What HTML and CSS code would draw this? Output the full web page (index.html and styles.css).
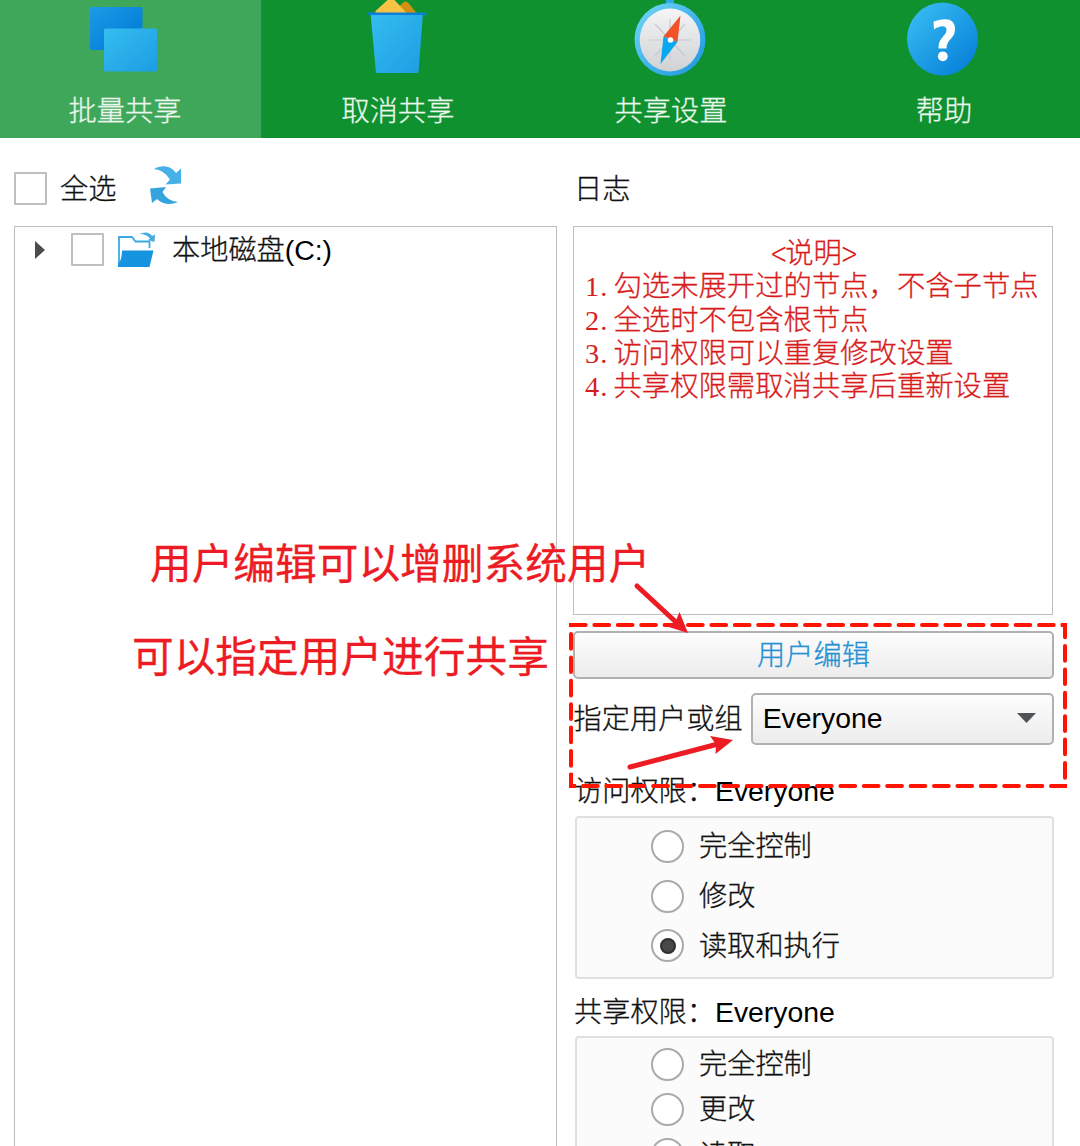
FILE: index.html
```html
<!DOCTYPE html>
<html lang="zh-CN">
<head>
<meta charset="utf-8">
<title>批量共享</title>
<link rel="stylesheet" href="styles.css">
</head>
<body>
<div class="app">
  <nav class="toolbar">
    <div class="tab active">
      <svg class="tab-icon" width="80" height="80" viewBox="0 0 80 80">
        <defs>
          <linearGradient id="light" x1="0" y1="0" x2="1" y2="1"><stop offset="0" stop-color="#35bdf0"/><stop offset="1" stop-color="#1d9de3"/></linearGradient>
          <linearGradient id="dark" x1="0" y1="0" x2="1" y2="1"><stop offset="0" stop-color="#1c9be5"/><stop offset="0.7" stop-color="#0781da"/></linearGradient>
        </defs>
        <rect x="5" y="8" width="52.5" height="43" rx="1.5" fill="url(#dark)"/>
        <rect x="19" y="29.500" width="53" height="43" rx="1.5" fill="url(#light)"/>
      </svg>
      <span>批量共享</span>
    </div>
    <div class="tab">
      <svg class="tab-icon" width="80" height="80" viewBox="9.500 0 80 80">
        <path d="M44 14 L54 4 Q57 1 60 4 L68 14 Z" fill="#d1900f"/>
        <path d="M27 14 V12 L38 2 Q42 -2 46 1 L58 14 Z" fill="#f6c344"/>
        <path d="M22 14 H74.500 L70 73 Q69.900 74 68.500 74 H29 Q27.500 74 27.400 73 Z" fill="url(#light)"/>
        <rect x="18.500" y="13.500" width="59.500" height="2.500" rx="1" fill="#0c80d8"/>
      </svg>
      <span>取消共享</span>
    </div>
    <div class="tab">
      <svg class="tab-icon" width="80" height="80" viewBox="0 0 80 80">
        <defs>
          <linearGradient id="ring" x1="0" y1="0" x2="1" y2="1"><stop offset="0" stop-color="#78d9f8"/><stop offset="0.5" stop-color="#43b5ed"/><stop offset="1" stop-color="#1b95dd"/></linearGradient>
          <linearGradient id="dial" x1="0" y1="0" x2="0" y2="1"><stop offset="0" stop-color="#f5f5f6"/><stop offset="1" stop-color="#cfd1d4"/></linearGradient>
        </defs>
        <rect x="35" y="-2" width="8" height="8" fill="#2baae8"/>
        <ellipse cx="39" cy="40.500" rx="35.500" ry="36.500" fill="url(#ring)"/>
        <ellipse cx="39" cy="41" rx="30.300" ry="31.500" fill="url(#dial)"/>
        <path d="M18 41H60M39 20V61M24 25L54 57M54 25L24 57" stroke="#c8cbce" stroke-width="1.200"/>
        <path d="M49.500 16.500 L32.500 37.500 L46.500 43 Z" fill="#f25228"/>
        <path d="M29.500 65 L32.500 37.500 L46.500 43 Z" fill="#0aa7f0"/>
        <circle cx="39.500" cy="41" r="2.800" fill="#fff"/>
      </svg>
      <span>共享设置</span>
    </div>
    <div class="tab">
      <svg class="tab-icon" width="80" height="80" viewBox="0 0 80 80">
        <defs><linearGradient id="help" x1="0.100" y1="0.100" x2="0.850" y2="0.900"><stop offset="0" stop-color="#36bbf0"/><stop offset="1" stop-color="#0882da"/></linearGradient></defs>
        <ellipse cx="38.500" cy="40" rx="35.500" ry="36.500" fill="url(#help)"/>
        <path d="M29.500 22.500 Q51 15.500 51 30 C51 40 42.500 40 42.500 49.500 H34.500 C34 38.500 42.500 37 42.500 31 C42.500 25.500 35 27 30 30.500 Z" fill="#fff"/>
        <circle cx="38.800" cy="57.300" r="4.900" fill="#fff"/>
      </svg>
      <span>帮助</span>
    </div>
  </nav>
  <main class="content">
    <section class="left">
      <div class="head">
        <span class="check"></span>
        <span class="all">全选</span>
        <svg class="refresh" width="34" height="40" viewBox="0 0 34 40">
          <path d="M4 4 C11 0 20 0 26 8 L31 3.500 V18.500 L15.500 19.500 L20 14.500 Q14 5 4 4Z" fill="#45b1e8"/>
          <path d="M0 23.500 L16 22 L12.500 27 Q17 36 28 37 C21 40 13 40 7 34 L2 38 Z" fill="#35a4dc"/>
        </svg>
      </div>
      <div class="tree">
        <div class="node">
          <svg class="caret" width="10" height="18" viewBox="0 0 10 18"><path d="M0 0L10 9L0 18Z" fill="#4b4b4b"/></svg>
          <span class="check"></span>
          <svg class="folder" width="40" height="40" viewBox="0 0 40 40">
            <path d="M2 35 V7 H15 L18.500 11.500 H32.500 V18" fill="#fff" stroke="#3aaae5" stroke-width="1.800"/>
            <path d="M5 20.500 H36.500 L32.500 37 H1 V34 Q5 30 5 20.500 Z" fill="#1694df"/>
            <path d="M22 4 Q31 0 35 6 L38 4.500 L37.500 12 L31 10 L33 8.500 Q29 3.500 22 4Z" fill="#43ace2"/>
          </svg>
          <span>本地磁盘<span class="latin">(C:)</span></span>
        </div>
      </div>
    </section>
    <section class="right">
      <div class="head">日志</div>
      <div class="log">
        <div class="log-title"><span class="angle">&lt;</span>说明<span class="angle">&gt;</span></div>
        <div><span class="num">1.</span>勾选未展开过的节点，不含子节点</div>
        <div><span class="num">2.</span>全选时不包含根节点</div>
        <div><span class="num">3.</span>访问权限可以重复修改设置</div>
        <div><span class="num">4.</span>共享权限需取消共享后重新设置</div>
      </div>
      <div class="button">用户编辑</div>
      <div class="field">
        <span>指定用户或组</span>
        <div class="combo"><span class="latin">Everyone</span><svg width="19" height="10" viewBox="0 0 19 10"><path d="M0 0H19L9.500 10Z" fill="#505355"/></svg></div>
      </div>
      <div class="caption access">访问权限：<span class="latin">Everyone</span></div>
      <div class="group">
        <div class="option"><i></i>完全控制</div>
        <div class="option"><i></i>修改</div>
        <div class="option"><i class="on"></i>读取和执行</div>
      </div>
      <div class="caption share">共享权限：<span class="latin">Everyone</span></div>
      <div class="group compact">
        <div class="option"><i></i>完全控制</div>
        <div class="option"><i></i>更改</div>
        <div class="option"><i class="on"></i>读取</div>
      </div>
    </section>
  </main>
  <div class="note note-edit">用户编辑可以增删系统用户</div>
  <div class="note note-share">可以指定用户进行共享</div>
  <svg class="marks" width="1080" height="1146" viewBox="0 0 1080 1146">
    <g fill="none" stroke="#fe1400" stroke-width="4" stroke-linecap="round" stroke-dasharray="14.700 8.700">
      <path d="M571 625H1065"/>
      <path d="M571 786H1065" stroke-dashoffset="11.400"/>
      <path d="M571 625V786" stroke-dashoffset="14.400"/>
      <path d="M1065 625V786" stroke-dashoffset="2.400"/>
      <path stroke-linecap="square" d="M571 625h1M571 786v-11M571 786h3M1064 786h1M1063 625h2v5" stroke-dasharray="none"/>
    </g>
    <g stroke="#ed1c24" stroke-width="5" stroke-linecap="round" fill="#ed1c24">
      <path d="M637 586L678 624"/><path d="M630 767L718 744"/>
      <path stroke="none" d="M688 633L667 626.500L675.500 621.500L679.500 612Z"/>
      <path stroke="none" d="M733 740L710 736L716 744.500L715.500 754Z"/>
    </g>
  </svg>
</div>
</body>
</html>
```
FILE: styles.css
```css
* { box-sizing: border-box; }
body {
  margin: 0;
  background: #fff;
  color: #111;
  font: 300 28.2px/34px "Liberation Sans", "Noto Sans CJK SC", sans-serif;
  -webkit-text-stroke: 0.3px currentColor;
}
.app { position: relative; height: 1146px; overflow: hidden; display: flex; flex-direction: column; }
.latin { color: #000; font-size: 28.4px; -webkit-text-stroke: 0; }

.toolbar { display: flex; height: 138px; flex: none; background: #0e912e; margin-left: -12px; }
.tab { width: 273px; flex: none; display: flex; flex-direction: column; align-items: center; color: #eaf6ec; }
.tab.active { background: #3fa75a; }
.tab-icon { display: block; margin: -1px 0 15px; flex: none; overflow: visible; }
.tab > span { padding-left: 1px; }

.content { flex: 1; min-height: 0; display: flex; gap: 16px; padding: 0 27px 0 14px; }
.left { width: 543px; flex: none; display: flex; flex-direction: column; white-space: nowrap; }
.right { flex: 1; min-width: 0; white-space: nowrap; }
.head { height: 88px; padding: 34px 1px 0; display: flex; align-items: flex-start; flex: none; }
.left .head { padding: 34px 0 0; }
.check { width: 33px; height: 33px; border: 2px solid #bfbfbf; border-radius: 1px; background: #fff; flex: none; }
.all { margin-left: 13px; width: 56px; }
.refresh { margin: -7px 0 0 34px; }

.tree { flex: 1; border: solid #bebebe; border-width: 1px 1px 0; padding: 6px 0 0 20px; }
.node { display: flex; align-items: center; height: 34px; }
.caret { margin-right: 26px; }
.folder { margin: 0 15px 0 13px; }
.node > .check { margin-top: -1px; }

.log { height: 389px; border: 1px solid #bebebe; padding: 10px 10px 0 11px; color: #d81c1c; line-height: 33.3px; font-size: 28.35px; }
.log-title { height: 33.3px; text-align: center; }
.angle { display: inline-block; width: 14px; height: 33px; line-height: 33px; vertical-align: top; font-family: "Noto Sans CJK SC", sans-serif; -webkit-text-stroke: 0; transform: translateY(-2px) scaleY(1.3); }
.num { display: inline-block; width: 28.5px; font-family: "Liberation Serif", serif; letter-spacing: 1px; -webkit-text-stroke: 0; }
.button { height: 48px; margin-top: 16px; border: 2px solid #b1b1b1; border-radius: 5px; background: linear-gradient(#fdfdfd, #ececec); color: #2491d3; text-align: center; line-height: 45px; margin-right: -1px; }
.field { display: flex; margin: 14px -1px 0 0.5px; height: 52px; align-items: center; gap: 8px; }
.combo { flex: 1; height: 52px; border: 2px solid #b1b1b1; border-radius: 5px; background: linear-gradient(#fdfdfd, #ececec); display: flex; align-items: center; justify-content: space-between; padding: 0 16px 2px 10px; color: #000; }
.caption { height: 34px; padding-left: 1px; }
.access { margin-top: 29px; }
.share { margin-top: 16px; }
.group { height: 163px; margin: 8px -1px 0 2px; border: 2px solid #dfe1e1; border-radius: 4px; background: #fbfbfb; padding: 3.5px 0 0 74px; }
.share + .group { margin-top: 7px; }
.option { height: 49.7px; display: flex; align-items: center; gap: 15px; }
.option i { width: 33px; height: 33px; border: 2px solid #aaa; border-radius: 50%; background: #fff; flex: none; display: grid; place-items: center; }
.option i.on::after { content: ""; width: 12px; height: 12px; border-radius: 50%; background: #484848; border: 2px solid #303030; }
.compact .option { height: 45.3px; }

.note { position: absolute; color: #ed1c24; font: 400 41.7px/50px "Noto Sans CJK SC", sans-serif; white-space: nowrap; }
.note-edit { left: 150px; top: 536px; }
.note-share { left: 132px; top: 629px; }
.marks { position: absolute; left: 0; top: 0; }
```
